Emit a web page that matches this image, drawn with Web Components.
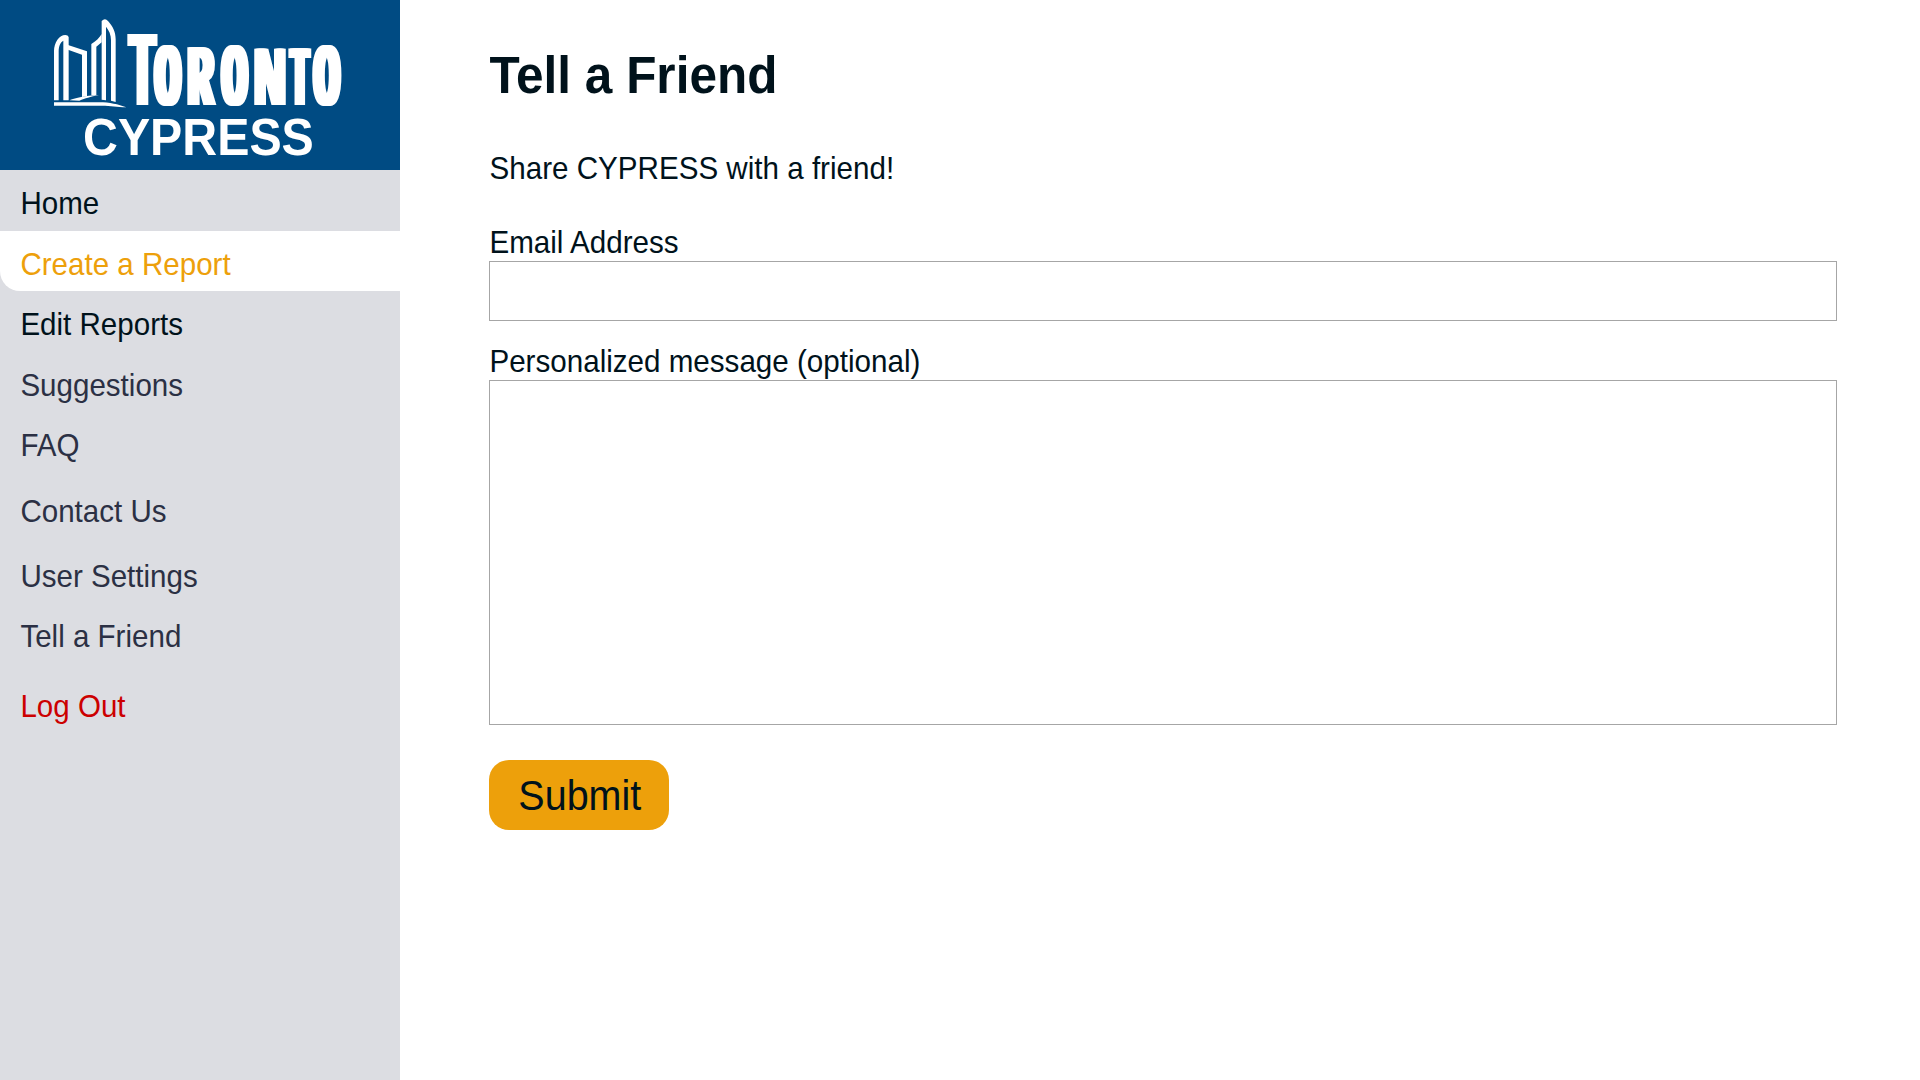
<!DOCTYPE html>
<html lang="en">
<head>
<meta charset="utf-8">
<title>Tell a Friend</title>
<style>
html,body{margin:0;height:100%;background:#fff}
body{font-family:"Liberation Sans",Arial,sans-serif;color:#00121b;overflow:hidden}
</style>
</head>
<body>
<cypress-app>
  <cypress-sidebar slot="side">
    <cypress-logo slot="logo"></cypress-logo>
    <nav-item style="height:61px">Home</nav-item>
    <nav-item active>Create a Report</nav-item>
    <nav-item style="height:61px">Edit Reports</nav-item>
    <nav-item muted>Suggestions</nav-item>
    <nav-item muted style="height:66px">FAQ</nav-item>
    <nav-item muted style="height:65px">Contact Us</nav-item>
    <nav-item muted>User Settings</nav-item>
    <nav-item muted style="height:70px">Tell a Friend</nav-item>
    <nav-item danger>Log Out</nav-item>
  </cypress-sidebar>
  <friend-form></friend-form>
</cypress-app>
<script>
const define=(name,html,setup)=>customElements.define(name,class extends HTMLElement{
  constructor(){super();const t=document.createElement('template');t.innerHTML=html;
    this.attachShadow({mode:'open'}).append(t.content.cloneNode(true));
    if(setup)setup(this.shadowRoot);}
});
define('cypress-app',`<style>:host{display:flex;width:1920px;height:1080px}</style><slot name="side"></slot><slot></slot>`);
define('cypress-sidebar',`<style>
:host{display:flex;flex-direction:column;width:400px;flex:none;background:#dcdde2}
nav{display:flex;flex-direction:column}
</style><slot name="logo"></slot><nav><slot></slot></nav>`);
define('nav-item',`<style>
:host{display:block;box-sizing:border-box;height:60px;background:#dcdde2}
div{box-sizing:border-box;height:100%;padding:7px 0 0 20.4px}
span{display:block;font-size:29.55px;line-height:53px;white-space:nowrap;transform:translateY(.4px) scaleY(1.06);transform-origin:0 37px}
:host([active]) div{background:#fff;border-bottom-left-radius:20px;color:#eda00b}
:host([muted]){color:#2b3044}
:host([danger]){color:#cc0000}
</style><div><span><slot></slot></span></div>`);
/* Condensed wordmark: each letter is fitted to its cell (data-w by data-t..data-b),
   and data-d thickens the upright strokes only. */
define('toronto-wordmark',`<style>
:host{display:flex;height:110px;font-family:"Liberation Mono",monospace;font-weight:700;color:#fff}
b{display:block;flex:none;height:100%}
i{display:block;width:0;font-style:normal;font-size:100px;line-height:100px;transform-origin:0 0}
</style><b data-w="31" data-t="33.6" data-b="105.4" data-d="2.5" style="margin-right:-5px"><i>T</i></b><b data-w="29.7" data-t="46.8" data-b="106.8" data-d="3.2" style="margin-right:4.6px"><i>O</i></b><b data-w="29.3" data-t="48" data-b="105.4" data-d="3" style="margin-right:3.7px"><i>R</i></b><b data-w="29.4" data-t="46.8" data-b="106.8" data-d="3.2" style="margin-right:4.3px"><i>O</i></b><b data-w="32" data-t="48" data-b="105.4" data-d="2.2" style="margin-right:2.3px"><i>N</i></b><b data-w="23.4" data-t="48" data-b="105.4" data-d="3" style="margin-right:.6px"><i>T</i></b><b data-w="29.7" data-t="46.8" data-b="106.8" data-d="3.2"><i>O</i></b>`,root=>{
  const c=document.createElement('canvas').getContext('2d');
  c.font='700 100px "Liberation Mono"';
  root.querySelectorAll('b').forEach(b=>{
    const i=b.firstChild,m=c.measureText(i.textContent),w=+b.dataset.w,t=+b.dataset.t,e=+b.dataset.b,d=+b.dataset.d;
    const sx=(w-2*d)/(m.actualBoundingBoxLeft+m.actualBoundingBoxRight);
    const sy=(e-t)/(m.actualBoundingBoxAscent+m.actualBoundingBoxDescent);
    const o=d/sx;
    b.style.width=w+'px';
    i.style.transform=`matrix(${sx},0,0,${sy},${d+m.actualBoundingBoxLeft*sx},${e-m.actualBoundingBoxDescent*sy-76.6*sy})`;
    i.style.textShadow=[-o,-o/2,o/2,o].map(v=>v+'px 0 0 #fff').join(',');
  });
});
define('cypress-logo',`<style>:host{display:flex;flex-direction:column;height:170px;background:#004b83;color:#fff}
.r{display:flex;height:110px}svg{display:block;flex:none}
.c{margin-left:83px;height:60px;font-size:48.3px;font-weight:700;line-height:54px;white-space:nowrap;transform:translateY(.8px) scaleY(1.07);transform-origin:0 44px}</style>
<div class="r"><svg width="127" height="110" viewBox="0 0 381 330" fill="#fff">
<path fill-rule="evenodd" d="M162 301V153C162 128 178 105 196 105Q204 105 206 111V301H190V122C181 126 176 139 176 155V301Z"/>
<path d="M204 135L261 154V288L246 291V164L204 149Z"/>
<path d="M274 286V132C288 124 298 114 305 102V127L289 140V285Z"/>
<path fill-rule="evenodd" d="M305 299V63Q315 52 324 63C338 79 347 94 347 118V306L333 302V121C333 104 327 91 318 80V301Z"/>
<path d="M208 301C230 294 251 286 297 286C269 290 257 296 238 302Z"/>
<path d="M162 307H297C330 307 354 313 379 322C350 321 333 317 305 317H162Z"/>
</svg><toronto-wordmark></toronto-wordmark></div><div class="c">CYPRESS</div>`);
define('text-field',`<style>:host{display:block}
label{display:block;font-size:29.6px;line-height:34px;height:35px;white-space:nowrap}
label span{display:inline-block;transform:translateX(.4px) scaleY(1.06);transform-origin:0 27px}
.b{display:block;box-sizing:border-box;width:1348px;border:1px solid #a6a6a6;background:#fff;border-radius:0;margin:0;padding:10px;resize:none;outline:0;height:var(--h)}
</style><label><span><slot></slot></span></label><textarea class="b"></textarea>`);
define('friend-form',`<style>
:host{display:flex;flex-direction:column;align-items:flex-start;padding-left:89px;box-sizing:border-box;width:1520px}
h1{margin:47px 0 0;font-size:49.5px;line-height:58px;font-weight:700;white-space:nowrap;transform:translate(.5px,0) scaleY(1.05);transform-origin:0 46px}
p{margin:47px 0 0;font-size:29.6px;line-height:34px;white-space:nowrap;transform:translateX(.5px) scaleY(1.06);transform-origin:0 27px}
.e{--h:60px;margin-top:40px}.m{--h:345px;margin-top:24px}
button{margin:35px 0 0;width:180px;height:70px;border:0;border-radius:20px;background:#eda00b;color:inherit;font:39.5px "Liberation Sans",Arial,sans-serif;padding:0}
button span{display:block;transform:translate(.8px,.5px) scaleY(1.06)}
</style>
<h1>Tell a Friend</h1><p>Share CYPRESS with a friend!</p>
<text-field class="e">Email Address</text-field>
<text-field class="m">Personalized message (optional)</text-field>
<button type="button"><span>Submit</span></button>`);
</script>
</body>
</html>
